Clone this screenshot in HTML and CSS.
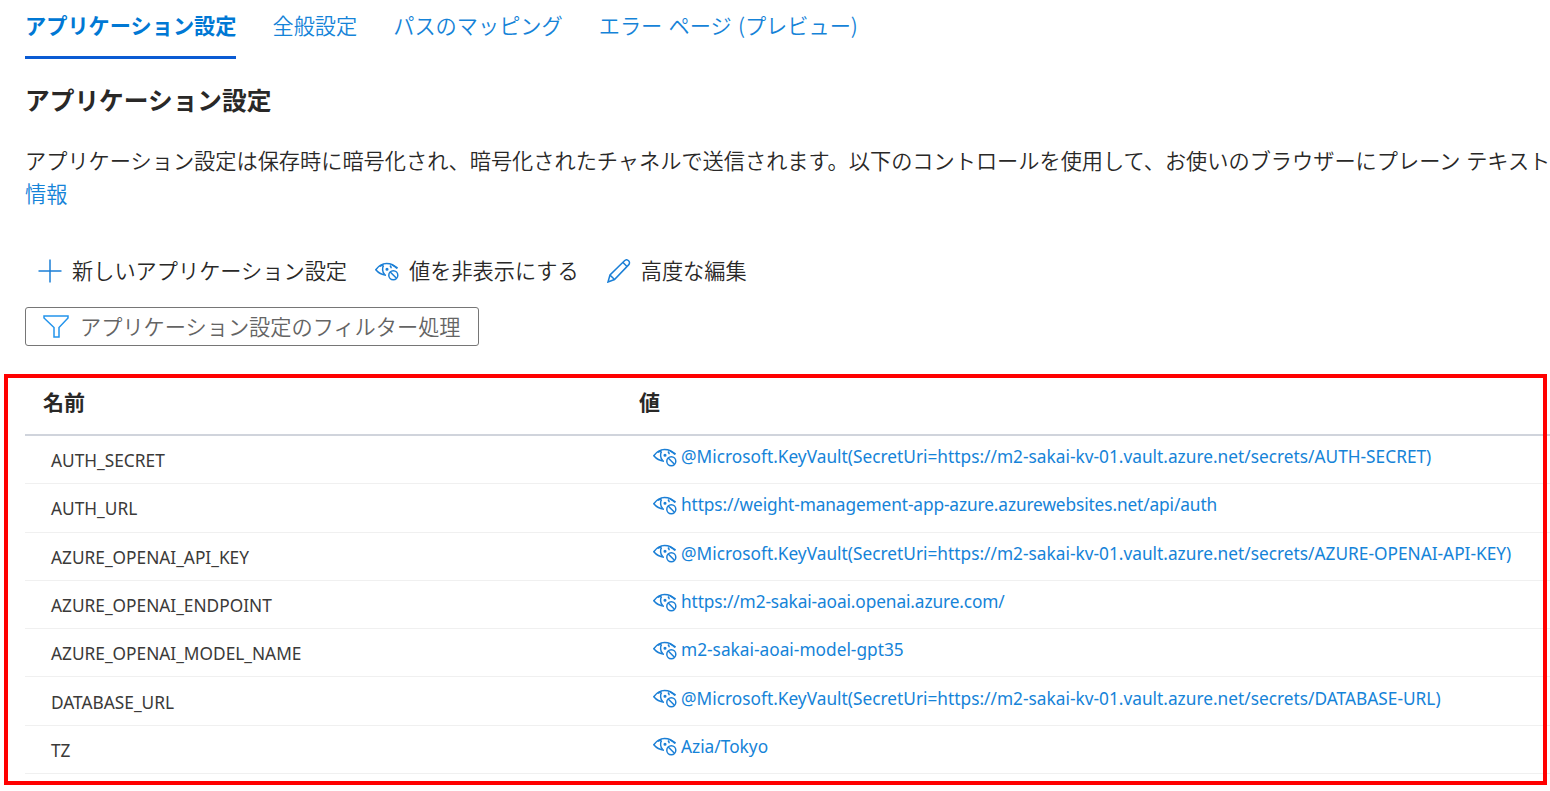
FILE: index.html
```html
<!DOCTYPE html>
<html lang="ja">
<head>
    <meta charset="UTF-8">
    <meta name="viewport" content="width=device-width, initial-scale=1.0">
    <title>アプリケーション設定</title>
    <link rel="stylesheet" href="styles.css">
</head>
<body>
    <!-- Shared icon -->
    <svg class="sprite" width="0" height="0">
        <symbol id="eye-off" viewBox="0 0 24 20">
            <path d="M11 14.200C6.500 13.800 3 11.500 .8 8.800 3.500 5 7 2.500 11.500 2.500c4.500 0 8 1.800 10.500 5"/>
            <path d="M5 5.400 8.600 3.400M17 3.800l5.600 3.200M8.500 4.500C7 7 7.300 11 9.500 13.300M15 4.500c.8.900 1.200 1.800 1.200 2.800"/>
            <circle cx="12" cy="8.300" r=".8"/>
            <circle cx="18.300" cy="14.200" r="4.500"/>
            <path d="M15.200 11l6.300 6.300"/>
        </symbol>
    </svg>

    <nav class="tabs">
        <a class="tab active">アプリケーション設定</a>
        <a class="tab">全般設定</a>
        <a class="tab">パスのマッピング</a>
        <a class="tab">エラー ページ (プレビュー)</a>
    </nav>

    <main class="content">
        <h1>アプリケーション設定</h1>
        <p class="description">アプリケーション設定は保存時に暗号化され、暗号化されたチャネルで送信されます。以下のコントロールを使用して、お使いのブラウザーにプレーン テキスト<br><a>情報</a></p>

        <!-- Commands -->
        <div class="toolbar">
            <div class="command">
                <svg class="icon" width="24" height="24" viewBox="0 0 24 24"><path d="M12 .5v23M.5 12h23"/></svg>
                <span>新しいアプリケーション設定</span>
            </div>
            <div class="command">
                <svg class="icon" width="24" height="20"><use href="#eye-off"/></svg>
                <span>値を非表示にする</span>
            </div>
            <div class="command">
                <svg class="icon" width="24" height="24" viewBox="0 0 24 24"><path d="M1 23l2-7L17.500 1.800c1.200-1.200 2.900-1.200 4.100 0s1.200 2.900 0 4.100L7.500 20.500zM3 16l4.500 4.500M16 3.500 20 7.500"/></svg>
                <span>高度な編集</span>
            </div>
        </div>

        <div class="filter">
            <svg class="icon" width="26" height="23" viewBox="0 0 26 23"><path d="M1 1h24v2l-9 9.500V22h-5v-9.500L1 3z"/></svg>
            <span>アプリケーション設定のフィルター処理</span>
        </div>
    </main>

    <!-- Settings table with highlight frame -->
    <section class="settings">
        <div class="row header"><span>名前</span><span>値</span></div>
        <div class="row"><span class="name">AUTH_SECRET</span><a class="value"><svg class="icon" width="24" height="20"><use href="#eye-off"/></svg><span>@Microsoft.KeyVault(SecretUri=https://m2-sakai-kv-01.vault.azure.net/secrets/AUTH-SECRET)</span></a></div>
        <div class="row"><span class="name">AUTH_URL</span><a class="value"><svg class="icon" width="24" height="20"><use href="#eye-off"/></svg><span class="tight">https://weight-management-app-azure.azurewebsites.net/api/auth</span></a></div>
        <div class="row"><span class="name">AZURE_OPENAI_API_KEY</span><a class="value"><svg class="icon" width="24" height="20"><use href="#eye-off"/></svg><span>@Microsoft.KeyVault(SecretUri=https://m2-sakai-kv-01.vault.azure.net/secrets/AZURE-OPENAI-API-KEY)</span></a></div>
        <div class="row"><span class="name">AZURE_OPENAI_ENDPOINT</span><a class="value"><svg class="icon" width="24" height="20"><use href="#eye-off"/></svg><span class="tight">https://m2-sakai-aoai.openai.azure.com/</span></a></div>
        <div class="row"><span class="name">AZURE_OPENAI_MODEL_NAME</span><a class="value"><svg class="icon" width="24" height="20"><use href="#eye-off"/></svg><span>m2-sakai-aoai-model-gpt35</span></a></div>
        <div class="row"><span class="name">DATABASE_URL</span><a class="value"><svg class="icon" width="24" height="20"><use href="#eye-off"/></svg><span>@Microsoft.KeyVault(SecretUri=https://m2-sakai-kv-01.vault.azure.net/secrets/DATABASE-URL)</span></a></div>
        <div class="row"><span class="name">TZ</span><a class="value"><svg class="icon" width="24" height="20"><use href="#eye-off"/></svg><span>Azia/Tokyo</span></a></div>
        <div class="highlight"></div>
    </section>
</body>
</html>
```
FILE: styles.css
```css
* {
    box-sizing: border-box;
}
body {
    font-family: "Noto Sans CJK JP", sans-serif;
    font-size: 21.2px;
    font-weight: 350;
    margin: 0;
    height: 791px;
    overflow: hidden;
    background: #fff;
    color: #292827;
}
.sprite {
    position: absolute;
}
.icon {
    flex: none;
    fill: none;
    stroke: #1b7fd6;
    stroke-width: 1.5;
}
a {
    color: #1583d8;
}
.tabs {
    display: flex;
    gap: 36px;
    padding-left: 25px;
    height: 59px;
    white-space: nowrap;
}
.tab {
    height: 59px;
    line-height: 50px;
    word-spacing: 1.5px;
}
.tab.active {
    color: #0078d4;
    font-weight: bold;
    border-bottom: 3px solid #0a5bd3;
}
.content {
    padding-left: 25px;
    height: 315px;
}
h1 {
    margin: 0;
    padding-top: 20px;
    font-size: 24.7px;
    line-height: 40px;
}
.description {
    margin: 24px 0 0;
    line-height: 33px;
    white-space: nowrap;
    word-spacing: 1px;
}
.toolbar {
    display: flex;
    gap: 28px;
    height: 40px;
    margin-top: 42px;
    padding-left: 13px;
}
.command {
    display: flex;
    align-items: center;
    gap: 10px;
}
.command span,
.filter span {
    padding-bottom: 3px;
}
.filter {
    display: flex;
    align-items: center;
    gap: 11px;
    width: 454px;
    height: 39px;
    margin-top: 16px;
    padding-left: 17px;
    border: 1px solid #767676;
    border-radius: 3px;
    color: #646464;
}
.filter .icon {
    stroke: #2394ec;
}
.settings {
    position: relative;
    height: 411px;
    padding-left: 25px;
}
.row {
    display: grid;
    grid-template-columns: 614px 1fr;
    align-items: center;
    height: 48.3px;
    border-bottom: 1px solid #f0f0f0;
    font-family: "Noto Sans", sans-serif;
    font-size: 17.3px;
    font-weight: 400;
    white-space: nowrap;
}
.row.header {
    height: 62px;
    padding-bottom: 7px;
    padding-left: 18px;
    grid-template-columns: 596px 1fr;
    border-bottom: 2px solid #d0d4dc;
    font-family: "Noto Sans CJK JP", sans-serif;
    font-size: 21px;
    font-weight: bold;
}
.name {
    padding-top: 2px;
    padding-left: 26px;
    color: #3b3a39;
}
.value {
    display: flex;
    align-items: center;
    gap: 4px;
    padding-left: 14px;
    padding-bottom: 6px;
}
.tight {
    letter-spacing: -0.12px;
}
/* Red frame drawn over the table */
.highlight {
    position: absolute;
    top: 0;
    left: 4px;
    width: 1543px;
    height: 411px;
    border: 4px solid #f00;
}
```
